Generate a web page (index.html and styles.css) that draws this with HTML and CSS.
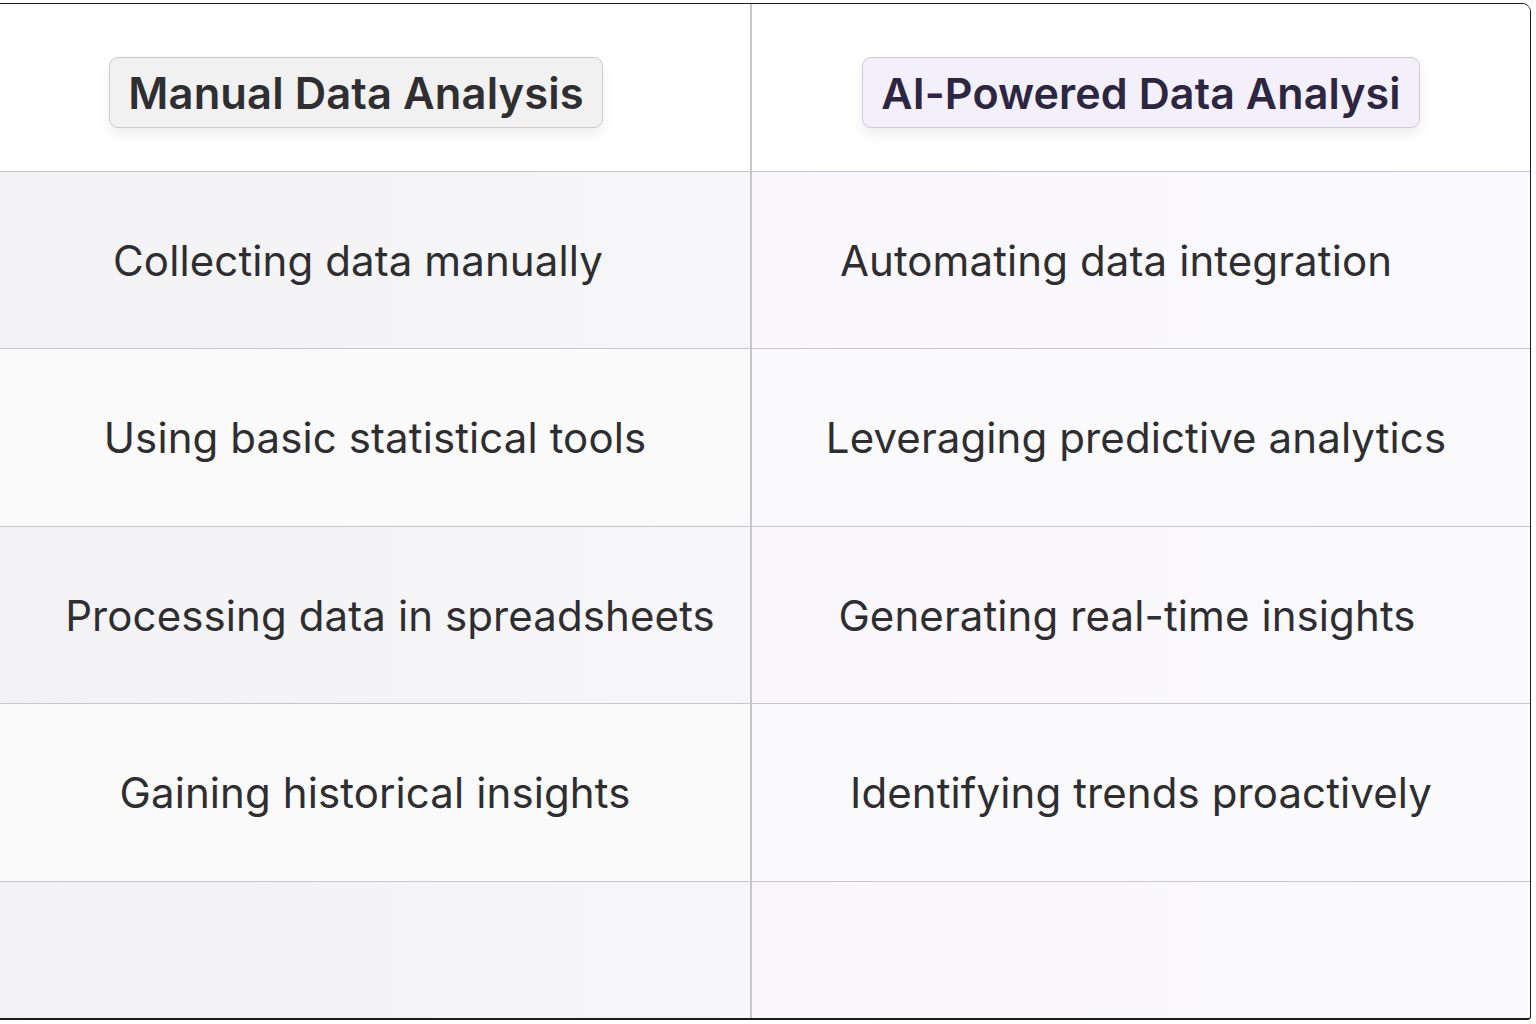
FILE: index.html
```html
<!DOCTYPE html>
<html lang="en">
<head>
<meta charset="utf-8">
<title>Manual vs AI-Powered Data Analysis</title>
<link rel="stylesheet" href="styles.css">
</head>
<body>
<div class="frame">
  <div class="cell head left"><span class="badge manual">Manual Data Analysis</span></div>
  <div class="cell head right"><span class="badge ai">AI-Powered Data Analysi</span></div>

  <div class="cell left shade nudge-l1">Collecting data manually</div>
  <div class="cell right shade nudge-r1">Automating data integration</div>

  <div class="cell left light">Using basic statistical tools</div>
  <div class="cell right light nudge-r2">Leveraging predictive analytics</div>

  <div class="cell left shade nudge-l3">Processing data in spreadsheets</div>
  <div class="cell right shade nudge-r3">Generating real-time insights</div>

  <div class="cell left light">Gaining historical insights</div>
  <div class="cell right light">Identifying trends proactively</div>

  <div class="cell left shade last"></div>
  <div class="cell right shade last"></div>
</div>
</body>
</html>
```
FILE: styles.css
```css
html, body {
  margin: 0;
  padding: 0;
  background: #ffffff;
}
body {
  padding-top: 3px;
  font-family: Inter, "Noto Sans", sans-serif;
}
.frame {
  width: 1531px;
  height: 1017px;
  box-sizing: border-box;
  border-top: 1.5px solid #1c1c1c;
  border-right: 1.5px solid #1c1c1c;
  border-bottom: 2px solid #1c1c1c;
  border-top-right-radius: 9px;
  border-bottom-right-radius: 4px;
  display: grid;
  grid-template-columns: 752px 1fr;
  grid-template-rows: 168px 177px 178px 177px 178px 1fr;
  overflow: hidden;
}
.cell {
  display: flex;
  align-items: center;
  justify-content: center;
  font-size: 42px;
  color: #2e2e31;
  letter-spacing: 0.1px;
  border-bottom: 1.5px solid #c6c6cb;
}
.cell.left {
  border-right: 2px solid #c6c6cb;
}
.cell.last {
  border-bottom: none;
}
.nudge-l1 { padding-right: 34px; }
.nudge-l3 { padding-left: 30px; }
.nudge-r1 { padding-right: 50px; }
.nudge-r2 { padding-right: 10px; }
.nudge-r3 { padding-right: 28px; }
.head {
  background: #ffffff;
}
.head.left {
  padding-right: 38px;
  padding-top: 10px;
}
.head.right {
  padding-top: 10px;
}
.shade.left {
  background: linear-gradient(90deg, #f3f3f5, #f6f6f8);
}
.shade.right {
  background: linear-gradient(90deg, #f9f7fc, #faf9fd);
}
.light.left {
  background: #fafafb;
}
.light.right {
  background: #fafafc;
}
.badge {
  display: inline-flex;
  align-items: center;
  box-sizing: border-box;
  height: 71px;
  padding: 0 18px;
  font-size: 43.5px;
  font-weight: 600;
  border-radius: 9px;
  box-shadow: 0 7px 14px rgba(0, 0, 0, 0.07);
}
.badge.manual {
  background: #f1f1f1;
  border: 1.5px solid #cacaca;
  color: #2f2f31;
}
.badge.ai {
  background: #f3effb;
  border: 1.5px solid #cdc9da;
  color: #2c2640;
  font-size: 43px;
}
```
